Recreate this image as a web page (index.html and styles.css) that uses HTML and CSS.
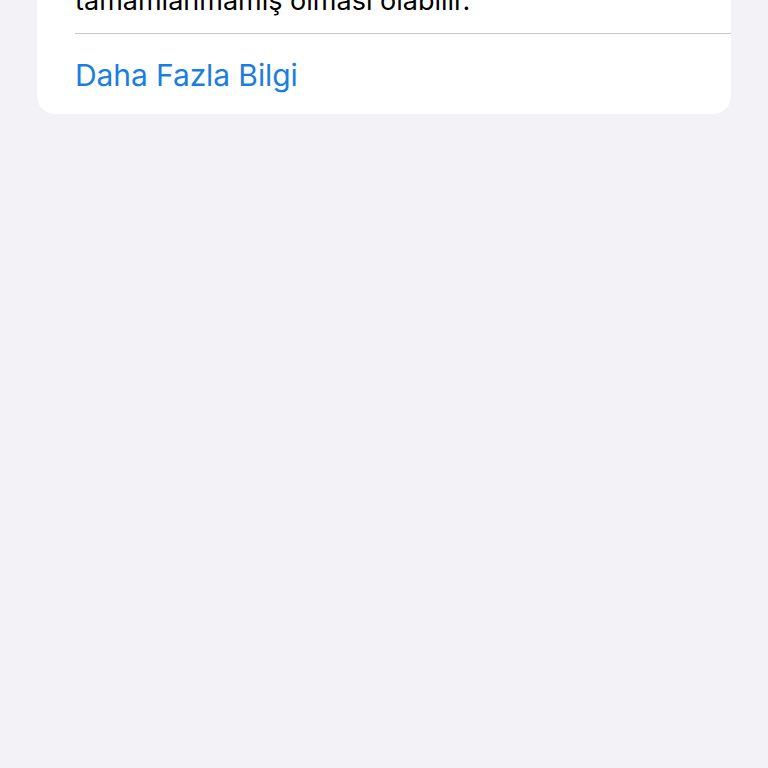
FILE: index.html
```html
<!DOCTYPE html>
<html lang="tr">
<head>
<meta charset="utf-8">
<link rel="stylesheet" href="styles.css">
</head>
<body>
<div class="card">
  <p class="desc">tamamlanmamış olması olabilir.</p>
  <div class="sep"></div>
  <div class="link">Daha Fazla Bilgi</div>
</div>
</body>
</html>
```
FILE: styles.css
```css
html, body {
  margin: 0;
  padding: 0;
  background: #f2f2f7;
  height: 100%;
}
body {
  font-family: Inter, "Liberation Sans", Arial, sans-serif;
}
.card {
  margin: -40px 37px 0 37px;
  background: #ffffff;
  border-radius: 0 0 18px 18px;
  padding-left: 38px;
}
.desc {
  margin: 0;
  padding: 0 38px 15px 0;
  font-size: 27px;
  line-height: 34px;
  color: #000;
  height: 73px;
  display: flex;
  align-items: flex-end;
  box-sizing: border-box;
}
.sep {
  height: 1px;
  background: #c8c8cc;
}
.link {
  font-size: 30px;
  line-height: 36px;
  color: #1a7ee0;
  padding: 23px 0 21px 0;
  letter-spacing: -0.1px;
}
```
